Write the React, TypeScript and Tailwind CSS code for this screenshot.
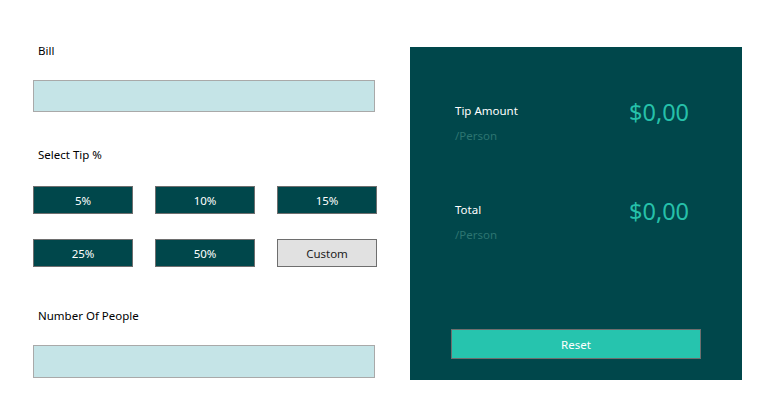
import React from "react";

const tips = ["5%", "10%", "15%", "25%", "50%"];

function ResultRow({ label, amount, className }: { label: string; amount: string; className?: string }) {
  return (
    <div className={"flex items-start " + (className ?? "")}>
      <div className="w-[174px]">
        <div className="h-4 text-[11.5px] leading-4 text-white">{label}</div>
        <div className="mt-[9px] h-4 text-[11.5px] leading-4 text-[#2c7571]">/Person</div>
      </div>
      <div className="-mt-[7px] h-8 text-[23.5px] leading-8 text-[#26c1aa]">{amount}</div>
    </div>
  );
}

export default function App() {
  return (
    <div className="flex h-[413px] w-[778px] bg-white font-['Noto_Sans',sans-serif]">
      <div className="ml-[33px] w-[344px]">
        <div className="mt-[43px] h-4 pl-[5px] text-[11.5px] leading-4 text-black">Bill</div>
        <input
          type="text"
          className="mt-[21px] block h-[32px] w-[342px] border border-[#a9a9a9] bg-[#c5e4e7] outline-none"
        />
        <div className="mt-[35px] h-4 pl-[5px] text-[11.5px] leading-4 text-black">Select Tip %</div>
        <div className="mt-[23px] grid grid-cols-[100px_100px_100px] gap-x-[22px] gap-y-[25px]">
          {tips.map((t) => (
            <button
              key={t}
              type="button"
              className="h-[28px] border border-[#6e6e6e] bg-[#00474b] pt-px text-[11.5px] text-white"
            >
              {t}
            </button>
          ))}
          <button
            type="button"
            className="h-[28px] border border-[#6e6e6e] bg-[#e1e1e1] pt-px text-[11.5px] text-[#222]"
          >
            Custom
          </button>
        </div>
        <div className="mt-[41px] h-4 pl-[5px] text-[11.5px] leading-4 text-black">Number Of People</div>
        <input
          type="text"
          className="mt-[21px] block h-[33px] w-[342px] border border-[#a9a9a9] bg-[#c5e4e7] outline-none"
        />
      </div>

      <div className="ml-[33px] mt-[47px] flex h-[333px] w-[332px] flex-col bg-[#00474b] pl-[45px] pt-[56px]">
        <ResultRow label="Tip Amount" amount="$0,00" />
        <ResultRow label="Total" amount="$0,00" className="mt-[58px]" />
        <button
          type="button"
          className="mb-[21px] -ml-[4px] mt-auto h-[30px] w-[250px] border border-[#6e6e6e] bg-[#26c4ae] pt-px text-[11.5px] text-white"
        >
          Reset
        </button>
      </div>
    </div>
  );
}
